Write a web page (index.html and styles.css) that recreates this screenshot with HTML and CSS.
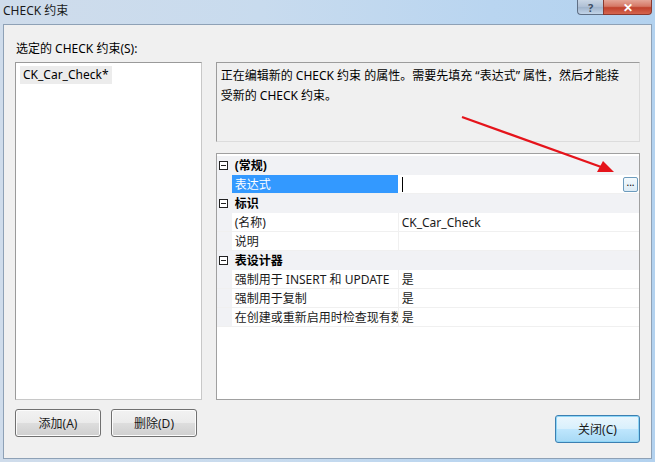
FILE: index.html
```html
<!DOCTYPE html>
<html>
<head>
<meta charset="utf-8">
<link rel="stylesheet" href="styles.css">
</head>
<body>
<div class="window">
  <div class="titlebar">
    <span class="title">CHECK 约束</span>
    <div class="caption">
      <span class="cap-btn help">?</span>
      <span class="cap-btn close">✕</span>
    </div>
  </div>
  <div class="client">
    <div class="left">
      <div class="label">选定的 CHECK 约束(S):</div>
      <div class="listbox">
        <div class="item">CK_Car_Check*</div>
      </div>
      <div class="btn-row">
        <button class="btn">添加(A)</button>
        <button class="btn">删除(D)</button>
      </div>
    </div>
    <div class="right">
      <div class="desc">正在编辑新的 CHECK 约束 的属性。需要先填充 “表达式” 属性，然后才能接<br>受新的 CHECK 约束。</div>
      <div class="pg">
        <div class="cat">
          <span class="gut"><svg width="9" height="9" viewBox="0 0 9 9"><rect x="0.5" y="0.5" width="8" height="8" fill="#fff" stroke="#222"/><line x1="2" y1="4.5" x2="7" y2="4.5" stroke="#222"/></svg></span>
          <span class="cat-label">(常规)</span>
        </div>
        <div class="prop sel">
          <span class="gut"></span>
          <span class="name">表达式</span>
          <span class="val"><span class="caret"></span><span class="ell">...</span></span>
        </div>
        <div class="cat">
          <span class="gut"><svg width="9" height="9" viewBox="0 0 9 9"><rect x="0.5" y="0.5" width="8" height="8" fill="#fff" stroke="#222"/><line x1="2" y1="4.5" x2="7" y2="4.5" stroke="#222"/></svg></span>
          <span class="cat-label">标识</span>
        </div>
        <div class="prop">
          <span class="gut"></span>
          <span class="name">(名称)</span>
          <span class="val">CK_Car_Check</span>
        </div>
        <div class="prop">
          <span class="gut"></span>
          <span class="name">说明</span>
          <span class="val"></span>
        </div>
        <div class="cat">
          <span class="gut"><svg width="9" height="9" viewBox="0 0 9 9"><rect x="0.5" y="0.5" width="8" height="8" fill="#fff" stroke="#222"/><line x1="2" y1="4.5" x2="7" y2="4.5" stroke="#222"/></svg></span>
          <span class="cat-label">表设计器</span>
        </div>
        <div class="prop">
          <span class="gut"></span>
          <span class="name">强制用于 INSERT 和 UPDATE</span>
          <span class="val">是</span>
        </div>
        <div class="prop">
          <span class="gut"></span>
          <span class="name">强制用于复制</span>
          <span class="val">是</span>
        </div>
        <div class="prop">
          <span class="gut"></span>
          <span class="name">在创建或重新启用时检查现有数</span>
          <span class="val">是</span>
        </div>
      </div>
      <div class="btn-row end">
        <button class="btn default">关闭(C)</button>
      </div>
    </div>
  </div>
  <svg class="arrow" width="655" height="462" viewBox="0 0 655 462">
    <line x1="462" y1="117" x2="604" y2="168" stroke="#e5141b" stroke-width="2.2"/>
    <polygon points="614,172 597,172 603,161" fill="#e5141b"/>
  </svg>
</div>
</body>
</html>
```

FILE: styles.css
```css
* { box-sizing: border-box; }
html, body { margin: 0; padding: 0; }
body {
  width: 655px;
  height: 462px;
  overflow: hidden;
  font-family: "Noto Sans", "Noto Sans CJK SC", sans-serif;
  font-size: 12px;
  color: #000;
}
.window {
  position: relative;
  width: 655px;
  height: 462px;
  display: flex;
  flex-direction: column;
  background: linear-gradient(90deg, #cfdceb 0%, #c8dbee 40%, #b9d5f0 75%, #b3d2ef 100%);
}
.titlebar {
  height: 24px;
  display: flex;
  align-items: flex-start;
  padding-left: 3px;
}
.title {
  line-height: 24px;
  margin-top: -1px;
  color: #1a1a1a;
}
.caption {
  margin-left: auto;
  margin-right: 3px;
  display: flex;
}
.cap-btn {
  height: 15px;
  display: flex;
  align-items: center;
  justify-content: center;
  font-weight: bold;
  color: #fff;
  font-size: 11px;
  border: 1px solid #5f6f85;
  border-top: none;
}
.help {
  width: 26px;
  border-radius: 0 0 0 4px;
  background: linear-gradient(#c9d6e5, #aebfd4 50%, #9fb3cb 51%, #c2d4e8);
  color: #3d4f66;
  border-right: none;
}
.close {
  width: 49px;
  border-radius: 0 0 4px 0;
  background: linear-gradient(#e4a597, #d57866 45%, #c0412c 55%, #d5654f);
  border-color: #8a3a30;
  font-size: 12px;
}
.client {
  flex: 1;
  margin: 0 3px 3px 3px;
  border: 1px solid #8ea1b6;
  background: #f0f0f0;
  display: flex;
  gap: 14px;
  padding: 15px 11px 0 11px;
}
.left {
  width: 187px;
  display: flex;
  flex-direction: column;
}
.label {
  height: 22px;
  padding-top: 2px;
  line-height: 14px;
  padding-left: 1px;
}
.listbox {
  height: 338px;
  background: #fff;
  border: 1px solid #8b8b8b;
  border-color: #9a9a9a #c8c8c8 #c8c8c8 #9a9a9a;
  padding: 3px 0 0 4px;
}
.item {
  display: inline-block;
  height: 18px;
  line-height: 18px;
  padding: 0 3px;
  background: #ececec;
}
.btn-row {
  display: flex;
  gap: 10px;
  margin-top: 9px;
}
.btn-row.end {
  justify-content: flex-end;
  margin-top: 15px;
}
.btn {
  width: 86px;
  height: 28px;
  font-family: inherit;
  font-size: 12px;
  color: #1a1a1a;
  border: 1px solid #707070;
  border-radius: 3px;
  background: linear-gradient(#f2f2f2 0%, #ebebeb 48%, #dddddd 52%, #cfcfcf 100%);
  box-shadow: inset 0 0 0 1px #fcfcfc;
  padding: 0;
}
.btn.default {
  width: 85px;
  border-color: #3c7fb1;
  background: linear-gradient(#eaf6fd 0%, #d9f0fc 48%, #bee6fd 52%, #a7d9f5 100%);
  box-shadow: inset 0 0 0 1px #8ed6f7;
}
.right {
  width: 425px;
  display: flex;
  flex-direction: column;
  padding-top: 22px;
}
.desc {
  height: 80px;
  border: 1px solid #a5a5a5;
  border-color: #9c9c9c #dcdcdc #dcdcdc #9c9c9c;
  background: #f0f0f0;
  padding: 3px 4px 0 4px;
  line-height: 20px;
  white-space: nowrap;
  overflow: hidden;
}
.pg {
  margin-top: 11px;
  height: 247px;
  border: 1px solid #a0a0a0;
  background: #fff;
  padding-top: 2px;
}
.cat, .prop {
  height: 19px;
  display: flex;
  align-items: stretch;
}
.cat {
  background: #f1f2f5;
  font-weight: bold;
}
.gut {
  width: 15px;
  flex: none;
  background: #f1f2f5;
  display: flex;
  align-items: center;
  padding-left: 2px;
}
.cat-label {
  padding-left: 3px;
  line-height: 19px;
}
.prop {
  border-bottom: 1px solid #f0f0f0;
}
.name {
  width: 167px;
  flex: none;
  padding-left: 3px;
  line-height: 19px;
  white-space: nowrap;
  overflow: hidden;
  border-right: 1px solid #f0f0f0;
  color: #1a1a1a;
}
.val {
  flex: 1;
  padding-left: 3px;
  line-height: 19px;
  display: flex;
  align-items: center;
  color: #1a1a1a;
}
.prop.sel .name {
  background: #3399ff;
  color: #fff;
  border-right-color: #fff;
}
.caret {
  width: 1px;
  height: 15px;
  background: #000;
}
.ell {
  margin-left: auto;
  margin-right: 1px;
  width: 15px;
  height: 15px;
  border: 1px solid #6c9bbd;
  border-radius: 2px;
  background: linear-gradient(#f4fafd, #dcebf5);
  font-size: 10px;
  line-height: 9px;
  text-align: center;
  color: #000;
}
.arrow {
  position: absolute;
  left: 0;
  top: 0;
  pointer-events: none;
}
```
